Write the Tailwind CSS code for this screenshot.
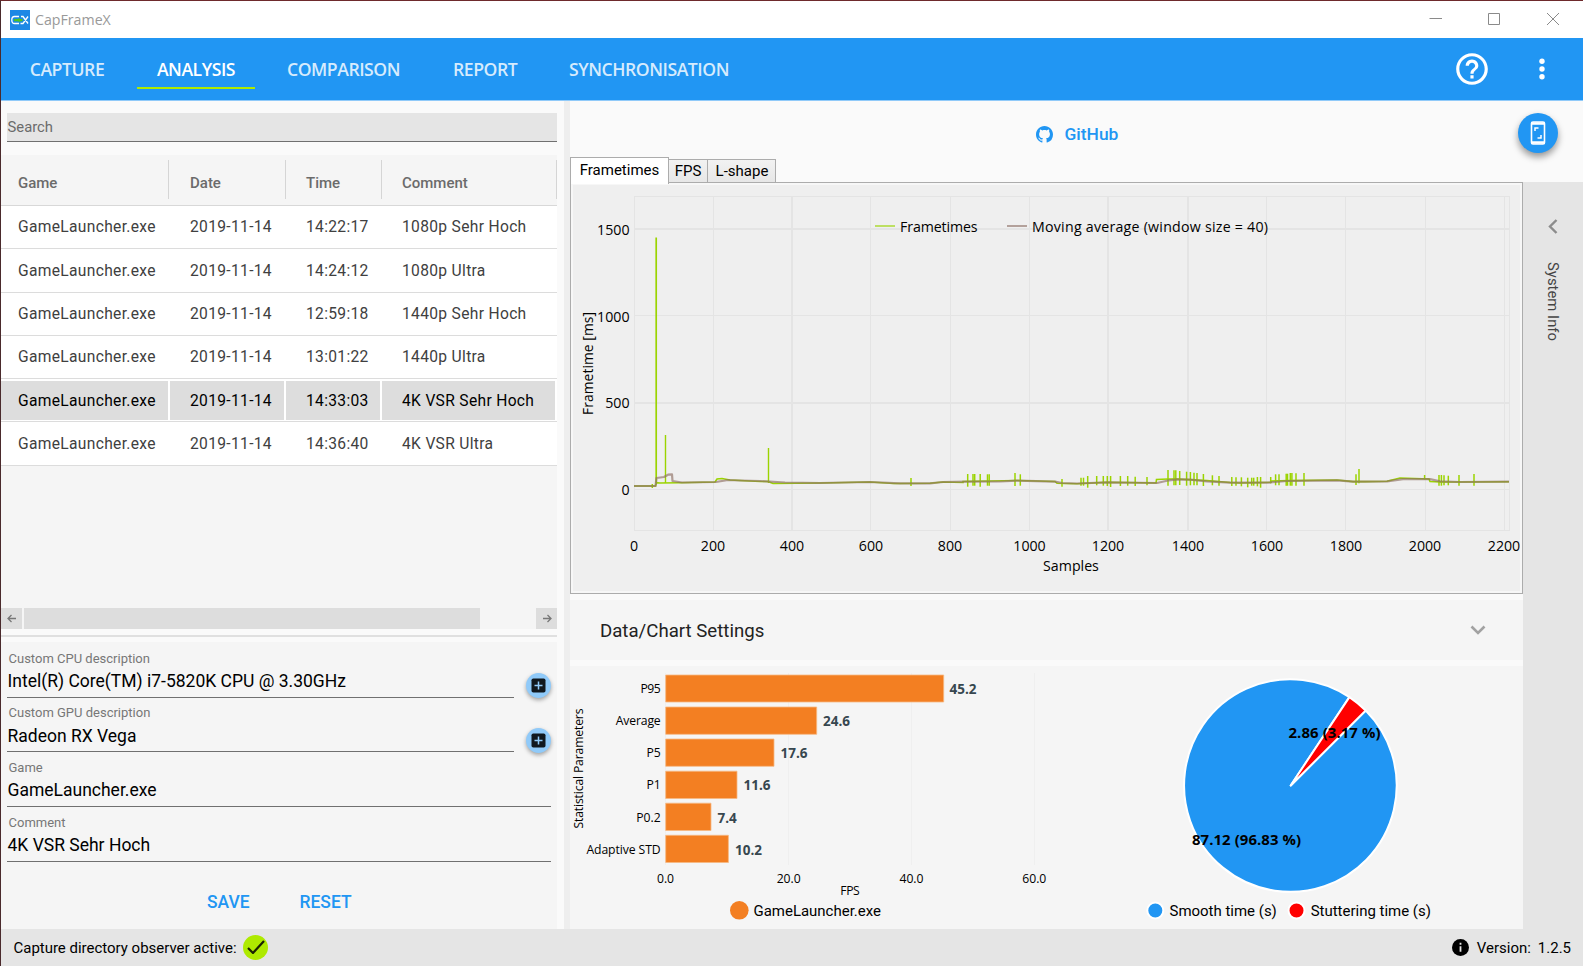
<!DOCTYPE html>
<html lang="en">
<head>
<meta charset="utf-8">
<title>CapFrameX</title>
<script src="https://cdn.jsdelivr.net/npm/@tailwindcss/browser@4"></script>
</head>
<body class="w-[1583px] h-[966px] overflow-hidden bg-[#fafafa] font-[Roboto,sans-serif] text-[15px] text-black">
<div class="w-full h-full flex flex-col border-t border-l border-t-[#6e2a2c] border-l-[#4a2a2c]">

  <!-- Title bar -->
  <header class="h-[37px] shrink-0 bg-white flex items-center pl-[9px] pr-[23px]">
    <svg class="w-5 h-5 mr-[5px]" viewBox="0 0 20 20"><rect width="20" height="20" fill="#1e88e5"/><path d="M9 6.500H4.500Q1.800 6.500 1.800 10T4.500 13.500H9M11 6.500H13L18 13.500M18 6.500L13 13.500H10.500" fill="none" stroke="#fff" stroke-width="1.300"/><path d="M4 9h4l1.500-1.500v1.500h3v2.300h-3v1.200L8 11.300H4z" fill="#4fc420"/></svg>
    <span class="font-['Open_Sans',sans-serif] text-[14.2px] leading-5 text-[#999]">CapFrameX</span>
    <svg class="ml-auto w-[131px] h-[14px]" viewBox="0 0 131 14" fill="none" stroke="#8a8a8a"><path d="M0.5 5.500H13M59.5 0.500h11v11h-11zM118 0l12 12M130 0l-12 12"/></svg>
  </header>

  <!-- Navigation -->
  <nav class="h-[63px] shrink-0 bg-[#2196f3] border-b border-[#90caf9] flex items-center pr-[28px] font-['Open_Sans',sans-serif] font-semibold text-[17.600px] tracking-[-0.450px] text-[#d6ebfd]">
    <div class="w-[136px] flex justify-center pr-[4px]">CAPTURE</div>
    <div class="w-[118px] h-full flex flex-col justify-end items-center pb-[11px] text-white"><span class="leading-6 mb-[6px]">ANALYSIS</span><i class="w-full h-[2px] bg-[#aeea00]"></i></div>
    <div class="ml-[32px] w-[166px]">COMPARISON</div>
    <div class="w-[116px]">REPORT</div>
    <div>SYNCHRONISATION</div>
    <svg class="ml-auto w-[38px] h-[38px]" viewBox="0 0 24 24" fill="#fff"><path d="M11 18h2v-2h-2v2zm1-16C6.48 2 2 6.48 2 12s4.480 10 10 10 10-4.480 10-10S17.520 2 12 2zm0 18c-4.410 0-8-3.590-8-8s3.590-8 8-8 8 3.590 8 8-3.590 8-8 8zm0-14c-2.210 0-4 1.790-4 4h2c0-1.100.9-2 2-2s2 .9 2 2c0 2-3 1.750-3 5h2c0-2.250 3-2.500 3-5 0-2.210-1.790-4-4-4z"/></svg>
    <svg class="ml-[38px] w-[26px] h-[26px]" viewBox="0 0 26 26" fill="#fff"><circle cx="13" cy="5.300" r="2.700"/><circle cx="13" cy="13" r="2.700"/><circle cx="13" cy="20.700" r="2.700"/></svg>
  </nav>

  <main class="h-[828px] shrink-0 flex">
    <!-- Record list and details -->
    <section class="w-[556px] shrink-0 flex flex-col">
      <div class="mt-[12px] ml-[6px] h-[29px] shrink-0 bg-[#e5e5e5] border-b border-[#707070] flex items-center pl-[0.500px] text-[14.8px] text-[#6b6b6b]">Search</div>
      <div class="mt-[13px] h-[453px] shrink-0 bg-[#f5f5f5] flex flex-col">
        <div class="h-[51px] shrink-0 flex items-center border-b border-[#d8d8d8] pb-px font-medium text-[#6b6b6b]">
          <div class="w-[168px] h-[39px] border-r border-[#d5d5d5] pl-[17px] pt-[7px] flex items-center">Game</div>
          <div class="w-[117px] h-[39px] border-r border-[#d5d5d5] pl-[21px] pt-[7px] flex items-center">Date</div>
          <div class="w-[96px] h-[39px] border-r border-[#d5d5d5] pl-[20px] pt-[7px] flex items-center">Time</div>
          <div class="w-[175px] h-[39px] border-r border-[#d5d5d5] pl-[20px] pt-[7px] flex items-center">Comment</div>
        </div>
        <div id="rows" class="bg-white text-[15.600px] tracking-[0.320px] text-[#404040]"></div>
      </div>
      <div class="h-[21px] shrink-0 bg-[#f5f5f5] flex text-[#777]">
        <div class="w-[21px] bg-[#ddd] flex items-center justify-center"><svg class="w-[9px] h-[9px]" viewBox="0 0 9 9" fill="none" stroke="#777" stroke-width="1.300"><path d="M9 4.500H1M4.500 1L1 4.500L4.500 8"/></svg></div>
        <div class="ml-[2px] w-[456px] bg-[#ddd]"></div>
        <div class="ml-auto w-[21px] bg-[#ddd] flex items-center justify-center"><svg class="ml-px w-[9px] h-[9px]" viewBox="0 0 9 9" fill="none" stroke="#777" stroke-width="1.300"><path d="M0 4.500H8M4.500 1L8 4.500L4.500 8"/></svg></div>
      </div>
      <div class="mt-[6px] h-[2px] shrink-0 bg-[#e0e0e0]"></div>
      <div class="mt-[5px] grow bg-[#f5f5f5] pl-[6px] pr-[6px] text-[17.500px]">
        <div class="flex h-[56px]">
          <div class="w-[507px] border-b border-[#707070]"><div class="pt-[8px] pl-[1.500px] h-[27px] text-[13px] leading-[18px] text-[#777]">Custom CPU description</div><div class="leading-[25px] pl-[0.500px]">Intel(R) Core(TM) i7-5820K CPU @ 3.30GHz</div></div>
          <div class="ml-[12px] mt-[31px] w-[25px] h-[25px] rounded-full bg-[#90caf9] shadow-[0_2px_4px_rgba(0,0,0,0.35)] flex items-center justify-center shrink-0"><svg class="w-[15px] h-[15px]" viewBox="0 0 15 15"><rect x=".5" y=".5" width="14" height="14" rx="1.800" fill="#10181f"/><path d="M7.500 3.500v8M3.500 7.500h8" stroke="#90caf9" stroke-width="1.500"/></svg></div>
        </div>
        <div class="flex h-[54px]">
          <div class="w-[507px] border-b border-[#707070]"><div class="pt-[6px] pl-[1.500px] h-[26px] text-[13px] leading-[18px] text-[#777]">Custom GPU description</div><div class="leading-[25px] pl-[0.500px]">Radeon RX Vega</div></div>
          <div class="ml-[12px] mt-[30px] w-[25px] h-[25px] rounded-full bg-[#90caf9] shadow-[0_2px_4px_rgba(0,0,0,0.35)] flex items-center justify-center shrink-0"><svg class="w-[15px] h-[15px]" viewBox="0 0 15 15"><rect x=".5" y=".5" width="14" height="14" rx="1.800" fill="#10181f"/><path d="M7.500 3.500v8M3.500 7.500h8" stroke="#90caf9" stroke-width="1.500"/></svg></div>
        </div>
        <div class="h-[55px] border-b border-[#707070]"><div class="pt-[7px] pl-[1.500px] h-[26px] text-[13px] leading-[18px] text-[#777]">Game</div><div class="leading-[25px] pl-[0.500px]">GameLauncher.exe</div></div>
        <div class="h-[55px] border-b border-[#707070]"><div class="pt-[7px] pl-[1.500px] h-[26px] text-[13px] leading-[18px] text-[#777]">Comment</div><div class="leading-[25px] pl-[0.500px]">4K VSR Sehr Hoch</div></div>
        <div class="pt-[26px] pl-[200px] flex gap-[50px] font-medium text-[17.460px] leading-7 text-[#2196f3]"><span>SAVE</span><span>RESET</span></div>
      </div>
    </section>

    <div class="ml-[7px] w-[6px] shrink-0 bg-[#eee]"></div>

    <!-- Charts -->
    <section class="w-[953px] shrink-0 flex flex-col">
      <div class="h-[56px] shrink-0 flex items-center pl-[466px] pt-[11px]">
        <svg class="w-[17px] h-[17px] mr-[11.500px]" viewBox="0 0 16 16" fill="#2196f3"><path d="M8 0C3.580 0 0 3.580 0 8c0 3.540 2.290 6.530 5.470 7.590.4.070.55-.17.55-.38 0-.19-.01-.82-.01-1.490-2.010.37-2.530-.49-2.690-.94-.09-.23-.48-.94-.82-1.130-.28-.15-.68-.52-.01-.53.63-.01 1.080.58 1.230.82.72 1.210 1.870.87 2.330.66.070-.52.28-.87.510-1.070-1.780-.2-3.640-.89-3.640-3.950 0-.87.310-1.590.82-2.150-.08-.2-.36-1.020.08-2.120 0 0 .67-.21 2.200.82.640-.18 1.320-.27 2-.27s1.360.09 2 .27c1.530-1.040 2.200-.82 2.200-.82.440 1.100.16 1.920.08 2.120.510.560.82 1.270.82 2.150 0 3.070-1.870 3.750-3.650 3.950.29.25.54.73.54 1.480 0 1.070-.01 1.930-.01 2.200 0 .21.15.46.55.38A8.010 8.010 0 0 0 16 8c0-4.420-3.580-8-8-8z"/></svg>
        <span class="font-medium text-[17.400px] text-[#2196f3]">GitHub</span>
      </div>
      <div class="h-[25px] shrink-0 flex items-end text-[15px] leading-5">
        <div class="z-10 w-[99px] h-[27px] -mb-[2px] bg-white border border-b-0 border-[#acacac] text-center pt-[2px]">Frametimes</div>
        <div class="w-[39px] h-[23px] bg-linear-to-b from-[#f2f2f2] to-[#e7e7e7] border-t border-r border-[#acacac] text-center pt-px">FPS</div>
        <div class="w-[68px] h-[23px] bg-linear-to-b from-[#f2f2f2] to-[#e7e7e7] border-t border-r border-[#acacac] text-center pt-px pl-px">L-shape</div>
      </div>
      <div class="h-[412px] shrink-0 border border-[#acacac] bg-[#f7f7f7] p-[2px]">
        <svg id="line" class="block w-[947px] h-[406px] bg-[#efefef]" viewBox="573 185 947 406" font-family="'Open Sans',sans-serif" font-size="14.200">
          <g stroke="#e4e4e4" fill="none">
            <rect x="634.500" y="196.500" width="875" height="334"/>
            <path d="M713.500 197v333M870.500 197v333M950.500 197v333M1029.500 197v333M1266.500 197v333M1345.500 197v333M1425.500 197v333M1504.500 197v333M635 489.500h874M635 315.500h874"/>
            <path stroke-width="2" d="M792 197v333M1108 197v333M1188 197v333M635 403h874M635 229h874"/>
          </g>
          <path d="M634 486H655.500L656.500 482.700L660 483L680 482.700L715 482L717 479L722 478.500L730 480L760 481.500L768 481.500L773 483.500L820 483L870 482L894 483.500L930 483.300L943 482L963 482.500L963 481.500L1017 480.500L1055 481.500L1057 483.300L1077 483.700L1107 482.300L1156 483L1156.500 479.500L1168 479L1177 479L1207 480.600L1230 482.500L1240 483L1271 482.300L1271 481L1290 480.600L1337 480L1353 481.600L1365 481.600L1387 481.300L1400 478L1429 479L1430 481.500L1440 482L1460 482L1509 481.700" fill="none" stroke="#9bd400" stroke-width="1.600"/>
          <path d="M656.200 237.500V483" stroke="#9bd400" stroke-width="1.700"/>
          <path d="M665.500 435V483M768.500 448V483" stroke="#9bd400" stroke-width="1.400"/>
          <g id="spikes" stroke="#9bd400" stroke-width="1.500"></g>
          <path d="M634 486H655.500L656.500 478L664 477L668 474.700L672 474.300L672.500 481L682 482.500L716 482L728 480L740 480.500L760 481L785 482.500L820 483L870 482L900 483.300L930 483.300L943 482L967 481.700L1000 481.500L1017 480.700L1055 481.700L1062 483L1077 483.500L1107 482.300L1157 483L1167 480.700L1177 479.300L1190 479.700L1207 481.300L1230 482.700L1267 482.700L1287 481L1337 480.300L1353 481.700L1387 481.300L1403 479.200L1430 479.200L1440 481.300L1460 482L1509 481.700" fill="none" stroke="#8d6e63" stroke-opacity=".65" stroke-width="2.200" stroke-linejoin="round"/>
          <path d="M875 226h20" stroke="#b4dc4a" stroke-width="1.700"/>
          <path d="M1007 226h20" stroke="#b3a19b" stroke-width="2"/>
          <text x="900" y="232" textLength="77.500">Frametimes</text>
          <text x="1032" y="232" textLength="236">Moving average (window size = 40)</text>
          <g text-anchor="end"><text x="629.500" y="234.500">1500</text><text x="629.500" y="321.500">1000</text><text x="629.500" y="407.700">500</text><text x="629.500" y="494.500">0</text></g>
          <g text-anchor="middle"><text x="634" y="551">0</text><text x="713" y="551">200</text><text x="792" y="551">400</text><text x="871" y="551">600</text><text x="950" y="551">800</text><text x="1029.500" y="551">1000</text><text x="1108" y="551">1200</text><text x="1188" y="551">1400</text><text x="1267" y="551">1600</text><text x="1346" y="551">1800</text><text x="1425" y="551">2000</text><text x="1504" y="551">2200</text><text x="1071" y="571">Samples</text>
          <text transform="translate(592.500 363.500) rotate(-90)" font-size="13.800" textLength="103">Frametime [ms]</text></g>
        </svg>
      </div>
      <div class="mt-[6px] h-[60px] shrink-0 bg-[#f5f5f5] flex items-center pl-[30px] pr-[37px] text-[18.640px] text-[#222]"><span class="pt-[3px]">Data/Chart Settings</span>
        <svg class="ml-auto w-[16px] h-[10px]" viewBox="0 0 16 10" fill="none" stroke="#a2a2a2" stroke-width="2.600"><path d="M1.500 1.500L8 8L14.500 1.500"/></svg>
      </div>
      <div class="mt-[6px] grow bg-[#f5f5f5]">
        <svg class="block w-[953px] h-[262px]" viewBox="570 666 953 262" font-family="'Open Sans',sans-serif" font-size="12.200">
          <path d="M665.500 673v192M788.500 673v192M911.500 673v192M1034.500 673v192" stroke="#efefef"/>
          <g fill="#f37f22" stroke="#f6b983" stroke-width=".8"><path d="M665.700 675h278v27h-278zM665.700 707h151v27.300h-151zM665.700 739h108.300v27.300h-108.300zM665.700 771.200h71.300v27.300h-71.300zM665.700 803.200h45.300v27.300h-45.300zM665.700 835.300h62.700v27.200h-62.700z"/></g>
          <g text-anchor="end"><text x="660.700" y="693" textLength="20.300">P95</text><text x="660.700" y="725" textLength="45">Average</text><text x="660.700" y="757">P5</text><text x="660.700" y="789">P1</text><text x="660.700" y="822">P0.2</text><text x="660.700" y="854" textLength="74.300">Adaptive STD</text></g>
          <g font-size="13.500" font-weight="700" fill="#37474f"><text x="949.500" y="694">45.2</text><text x="823" y="726">24.6</text><text x="780.500" y="758">17.6</text><text x="743.500" y="790">11.6</text><text x="717.500" y="823">7.4</text><text x="735" y="855">10.2</text></g>
          <g text-anchor="middle"><text x="665.500" y="883">0.0</text><text x="788.700" y="883">20.0</text><text x="911.500" y="883">40.0</text><text x="1034.300" y="883">60.0</text><text x="850" y="895" textLength="19.500">FPS</text><text transform="translate(583 768.500) rotate(-90)" textLength="120">Statistical Parameters</text></g>
          <circle cx="739.300" cy="910.300" r="9.300" fill="#f37f22"/>
          <g font-family="Roboto,sans-serif" font-size="14.980"><text x="753.500" y="916">GameLauncher.exe</text><text x="1169.500" y="916">Smooth time (s)</text><text x="1310.700" y="916">Stuttering time (s)</text></g>
          <g stroke="#fff" stroke-width="2"><circle cx="1155.300" cy="910.500" r="8" fill="#2196f3"/><circle cx="1296.500" cy="910.500" r="8" fill="red"/>
            <path d="M1290.700 785.500L1365.700 710.500A106.300 106.300 0 1 1 1349.400 697.100Z" fill="#2196f3" stroke-linejoin="round"/>
            <path d="M1290.700 785.500L1349.400 697.100A106.300 106.300 0 0 1 1365.700 710.500Z" fill="red" stroke-linejoin="round"/></g>
          <g font-size="14.900" font-weight="700"><text x="1288.500" y="738" textLength="92">2.86 (3.17 %)</text><text x="1192" y="845" textLength="109">87.12 (96.83 %)</text></g>
        </svg>
      </div>
    </section>

    <!-- System info rail -->
    <aside class="grow flex flex-col">
      <div class="relative h-[81px] shrink-0">
        <div class="absolute -left-[5px] top-[12px] w-10 h-10 rounded-full bg-[#2196f3] shadow-[0_4px_7px_rgba(0,0,0,0.4)] flex items-center justify-center"><svg class="w-[16px] h-[24px]" viewBox="0 0 16 24" fill="none" stroke="#fff"><rect x="1.500" y="1" width="13" height="22" rx="1.500" stroke-width="1.600"/><path d="M1 2.500h14M1 21.500h14" stroke-width="2.600"/><path d="M5 10V7h3.500M11 14v3H7.500" stroke-width="1.500"/></svg></div>
      </div>
      <div class="grow bg-[#e5e5e5] flex flex-col items-center pt-[37px]">
        <svg class="w-[10px] h-[15px] mr-[1px]" viewBox="0 0 10 15" fill="none" stroke="#8c8c8c" stroke-width="2.400"><path d="M8.500 1L2 7.500L8.500 14"/></svg>
        <div class="mt-[28px] [writing-mode:vertical-rl] text-[14.900px] leading-5 text-[#444]">System Info</div>
      </div>
    </aside>
  </main>

  <!-- Status bar -->
  <footer class="grow bg-[#e5e5e5] flex items-center pl-[12.500px] pr-[12px] text-[14.980px]">
    <span class="pt-px">Capture directory observer active:</span>
    <div class="ml-[6.500px] mb-px w-[25px] h-[25px] rounded-full bg-[#aeea00] flex items-center justify-center"><svg class="w-[18px] h-[14px]" viewBox="0 0 18 14" fill="none" stroke="#1a2300" stroke-width="2.200"><path d="M1 8l5 5L17 1"/></svg></div>
    <svg class="ml-auto mr-[8px] mb-px w-[17px] h-[17px]" viewBox="0 0 17 17"><circle cx="8.500" cy="8.500" r="8.500"/><path d="M8.500 3.800v2M8.500 7.300v5.400" stroke="#e5e5e5" stroke-width="1.800"/></svg>
    <span class="mr-[7px] pt-px">Version:</span><span class="pt-px">1.2.5</span>
  </footer>
</div>

<script>
// Capture records; the fifth one is selected.
const records = [
  ['14:22:17', '1080p Sehr Hoch', 43], ['14:24:12', '1080p Ultra', 44], ['12:59:18', '1440p Sehr Hoch', 43],
  ['13:01:22', '1440p Ultra', 43], ['14:33:03', '4K VSR Sehr Hoch', 43], ['14:36:40', '4K VSR Ultra', 44],
];
const cell = (w, pad, t, sel) => `<div class="${w} ${pad} pt-[2px] flex items-center ${sel ? 'bg-[#ddd] text-black' : ''}">${t}</div>`;
document.getElementById('rows').innerHTML = records.map(([time, note, h], i) => {
  const s = i === 4;
  return `<div class="flex border-b border-[#dcdcdc] ${s ? 'pt-[2px] pb-px' : ''} gap-[2px]" style="height:${h}px">` +
    cell('w-[167px]', 'pl-[17px]', 'GameLauncher.exe', s) + cell('w-[114px]', 'pl-[20px]', '2019-11-14', s) +
    cell('w-[94px]', 'pl-[20px]', time, s) + cell('w-[173px]', 'pl-[20px]', note, s) + '</div>';
}).join('');

// Short frametime spikes: [x, top, bottom]
const spikes = [
  [652.3,484,488],[911,478,486],[967.7,474,486.7],[973,474,485.7],[974.7,474,485.7],[980.2,474,486.7],[987.5,474.3,485.7],[989.2,474.3,485.7],
  [1015,473,486],[1020.3,474.3,485.7],[1062,479,486.7],[1081,477.7,485.7],[1083.5,477.7,485.7],[1087.7,476,487.7],[1096.7,476,485.3],[1103.3,476,485.7],
  [1107.3,476,486],[1110.6,476,487],[1120.4,476,486],[1127.7,476,485.7],[1135.2,476.7,486],[1147,477,485.3],[1168,470,485.7],[1174,470.3,485.3],[1175.8,470.3,485.3],
  [1179.7,471,485],[1186.6,471.7,485.7],[1190.4,472,485.3],[1194,472.7,485.3],[1197,473,485.3],[1203.4,474,486],[1212.4,475.3,485.3],[1219,476,485.7],
  [1231.8,477,486],[1236,477.3,485.7],[1241.4,477.3,486.3],[1247.7,477.7,487.3],[1251.7,477.7,485.7],[1253.7,477.7,485.7],[1257.4,477,486.3],[1260.6,477,487.7],
  [1270.7,477,483.3],[1275.6,474.3,485.3],[1279,474.3,485.3],[1286.2,473.7,485.7],[1287.5,473.7,485.7],[1290.3,473,485.7],[1291.9,473,485.7],[1296,473.3,485.7],[1304,473,485.7],
  [1356,474.3,485],[1359,469,483.3],[1424.6,475,479.3],[1439,475,485.7],[1441.4,475,485.7],[1444,475.3,485.3],[1448.3,475.7,485.3],[1459,475,485.7],[1474,474,485.7],
];
document.getElementById('spikes').innerHTML = spikes.map(([x, a, b]) => `<path d="M${x} ${a}V${b}"/>`).join('');
</script>
</body>
</html>
